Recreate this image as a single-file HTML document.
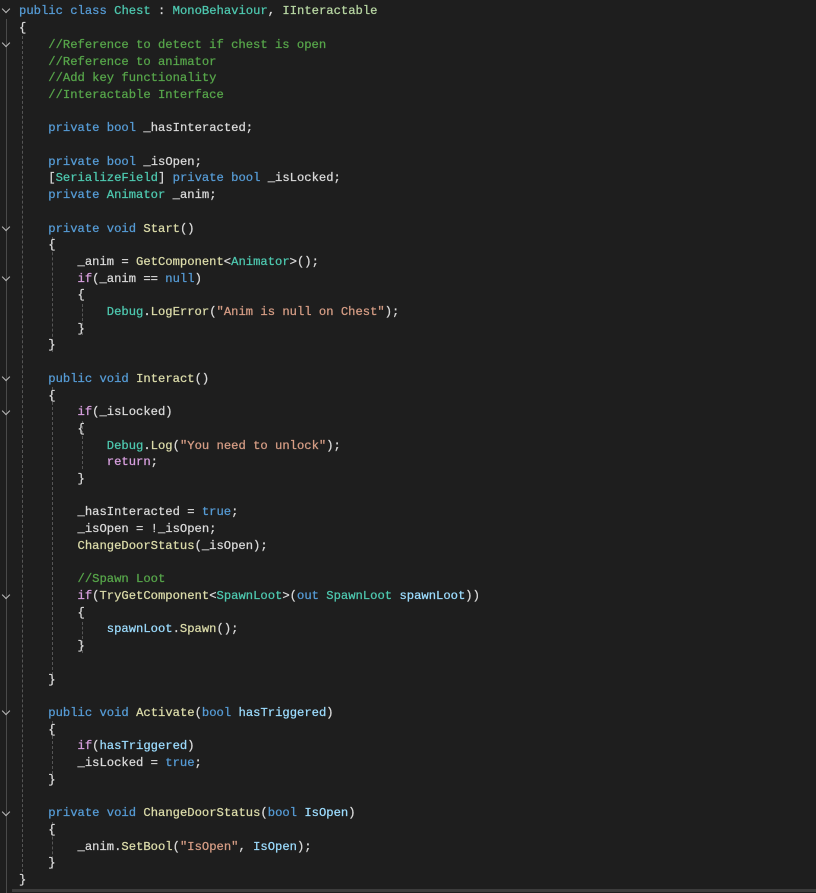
<!DOCTYPE html><html><head><style>
body{margin:0;width:816px;height:893px;background:#1e1e1e;overflow:hidden;position:relative}
pre{position:absolute;left:19px;top:3.4px;margin:0;font:12.2px/16.7px "Liberation Mono",monospace;color:#dadada;white-space:pre;-webkit-text-stroke:0.25px currentColor}
.k{color:#569cd6}.t{color:#4ec9b0}.i{color:#b8d7a3}.c{color:#57a64a}.m{color:#dcdcaa}.s{color:#d69d85}.f{color:#d8a0df}.p{color:#9cdcfe}
.g{position:absolute;border-left:1px dashed #555;width:0}
.v{position:absolute;left:6px;width:1px;background:#4a4a4a}
.ch{position:absolute;left:3px;width:5px;height:5px;border-right:1px solid #bbb;border-bottom:1px solid #bbb;transform:rotate(45deg)}
</style></head><body>
<div class="v" style="top:19px;height:874px"></div>
<div class="ch" style="top:6px"></div><div class="ch" style="top:40px"></div><div class="ch" style="top:224px"></div><div class="ch" style="top:274px"></div><div class="ch" style="top:374px"></div><div class="ch" style="top:408px"></div><div class="ch" style="top:592px"></div><div class="ch" style="top:708px"></div><div class="ch" style="top:809px"></div>
<div class="g" style="left:22px;top:36px;height:836px"></div>
<div class="g" style="left:52px;top:237px;height:115px"></div>
<div class="g" style="left:52px;top:387px;height:298px"></div>
<div class="g" style="left:52px;top:721px;height:63px"></div>
<div class="g" style="left:52px;top:822px;height:47px"></div>
<div class="g" style="left:82px;top:304px;height:31px"></div>
<div class="g" style="left:82px;top:421px;height:48px"></div>
<div class="g" style="left:82px;top:622px;height:31px"></div>
<div style="position:absolute;left:12px;top:889px;width:804px;height:3px;background:#3c3c3c"></div>
<pre><span class="k">public</span> <span class="k">class</span> <span class="t">Chest</span> : <span class="t">MonoBehaviour</span>, <span class="i">IInteractable</span>
{
    <span class="c">//Reference to detect if chest is open</span>
    <span class="c">//Reference to animator</span>
    <span class="c">//Add key functionality</span>
    <span class="c">//Interactable Interface</span>

    <span class="k">private</span> <span class="k">bool</span> _hasInteracted;

    <span class="k">private</span> <span class="k">bool</span> _isOpen;
    [<span class="t">SerializeField</span>] <span class="k">private</span> <span class="k">bool</span> _isLocked;
    <span class="k">private</span> <span class="t">Animator</span> _anim;

    <span class="k">private</span> <span class="k">void</span> <span class="m">Start</span>()
    {
        _anim = <span class="m">GetComponent</span>&lt;<span class="t">Animator</span>&gt;();
        <span class="f">if</span>(_anim == <span class="k">null</span>)
        {
            <span class="t">Debug</span>.<span class="m">LogError</span>(<span class="s">"Anim is null on Chest"</span>);
        }
    }

    <span class="k">public</span> <span class="k">void</span> <span class="m">Interact</span>()
    {
        <span class="f">if</span>(_isLocked)
        {
            <span class="t">Debug</span>.<span class="m">Log</span>(<span class="s">"You need to unlock"</span>);
            <span class="f">return</span>;
        }

        _hasInteracted = <span class="k">true</span>;
        _isOpen = !_isOpen;
        <span class="m">ChangeDoorStatus</span>(_isOpen);

        <span class="c">//Spawn Loot</span>
        <span class="f">if</span>(<span class="m">TryGetComponent</span>&lt;<span class="t">SpawnLoot</span>&gt;(<span class="k">out</span> <span class="t">SpawnLoot</span> <span class="p">spawnLoot</span>))
        {
            <span class="p">spawnLoot</span>.<span class="m">Spawn</span>();
        }

    }

    <span class="k">public</span> <span class="k">void</span> <span class="m">Activate</span>(<span class="k">bool</span> <span class="p">hasTriggered</span>)
    {
        <span class="f">if</span>(<span class="p">hasTriggered</span>)
        _isLocked = <span class="k">true</span>;
    }

    <span class="k">private</span> <span class="k">void</span> <span class="m">ChangeDoorStatus</span>(<span class="k">bool</span> <span class="p">IsOpen</span>)
    {
        _anim.<span class="m">SetBool</span>(<span class="s">"IsOpen"</span>, <span class="p">IsOpen</span>);
    }
}</pre>
</body></html>
